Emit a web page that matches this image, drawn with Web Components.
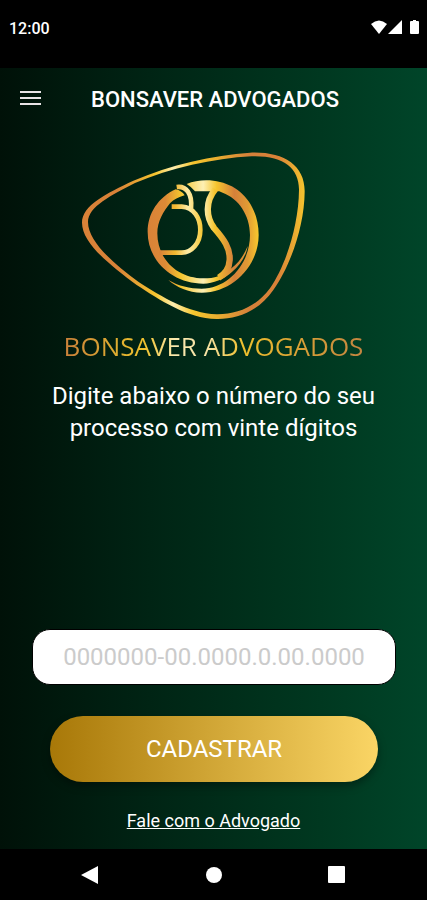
<!DOCTYPE html>
<html lang="pt-BR">
<head>
<meta charset="utf-8">
<meta name="viewport" content="width=device-width, initial-scale=1">
<title>Bonsaver Advogados</title>
<style>
    html, body {
        margin: 0;
        background-color: black;
        font-family: Roboto, "Liberation Sans", sans-serif;
        color: white;
    }
</style>
</head>
<body>
<bonsaver-app></bonsaver-app>

<script>
const makeTemplate = (html) => {
  const template = document.createElement("template");
  template.innerHTML = html;
  return template;
};

const statusTemplate = makeTemplate(`
    <style>
        :host {
            display: flex;
            align-items: center;
            justify-content: space-between;
            height: 56px;
            padding: 0 7px 12px 9px;
            background-color: black;
            font-size: 16px;
            font-weight: 500;
        }
        svg { display: block; }
    </style>
    <slot></slot>
    <svg width="50" height="16" viewBox="0 0 50 16" fill="white" aria-hidden="true">
        <path d="M1 4Q9 -3 17 4L9 14Z"/>
        <path d="M32 0V14H18Z"/>
        <path d="M41 1H43V0H46V1H48Q49 1 49 2V13Q49 14 48 14H41Q40 14 40 13V2Q40 1 41 1Z"/>
    </svg>
`);

const barTemplate = makeTemplate(`
    <style>
        :host {
            display: flex;
            align-items: center;
            gap: 50px;
            height: 62px;
            padding: 0 20px;
        }
        button {
            display: block;
            padding: 0;
            border: none;
            background: none;
        }
        svg { display: block; }
        h1 {
            margin: 2px 0 0;
            font-size: 22px;
            font-weight: 500;
            line-height: 28px;
        }
    </style>
    <button type="button" aria-label="Menu">
        <svg width="21" height="16" viewBox="0 0 21 16" fill="#e8e4e6">
            <path d="M0 0h21v2H0zM0 6h21v2H0zM0 12h21v2H0z"/>
        </svg>
    </button>
    <h1><slot></slot></h1>
`);

const logoTemplate = makeTemplate(`
    <style>
        :host {
            display: flex;
            flex-direction: column;
            align-items: center;
        }
        svg { display: block; }
        p {
            margin: 0;
            font-family: "Open Sans", "Noto Sans", sans-serif;
            font-size: 26px;
            line-height: 32px;
            color: transparent;
            background: linear-gradient(to right, #c9803a, #dfae30 18%, #f0c22e 27%, #fbeab0 37%, #f6e2a4 48%, #efc02d 60%, #dca635 75%, #c38540);
            background-clip: text;
            -webkit-background-clip: text;
        }
    </style>
    <svg width="287" height="190" viewBox="0 0 861 570" aria-hidden="true">
        <defs>
            <linearGradient id="loop" gradientUnits="userSpaceOnUse" x1="36" y1="0" x2="704" y2="0">
                <stop offset="0" stop-color="#d98238"/>
                <stop offset=".16" stop-color="#d98238"/>
                <stop offset=".33" stop-color="#f5c52e"/>
                <stop offset=".41" stop-color="#fdeeb0"/>
                <stop offset=".5" stop-color="#f5c52e"/>
                <stop offset=".6" stop-color="#eab030"/>
                <stop offset=".75" stop-color="#d5803a"/>
                <stop offset=".88" stop-color="#d98238"/>
                <stop offset="1" stop-color="#f5c52e"/>
            </linearGradient>
            <linearGradient id="ring" gradientUnits="userSpaceOnUse" x1="233" y1="0" x2="566" y2="0">
                <stop offset="0" stop-color="#d98238"/>
                <stop offset=".16" stop-color="#dd8a36"/>
                <stop offset=".3" stop-color="#f5c52e"/>
                <stop offset=".5" stop-color="#fdf0b4"/>
                <stop offset=".62" stop-color="#f5c52e"/>
                <stop offset=".78" stop-color="#d5803a"/>
                <stop offset=".9" stop-color="#e09a34"/>
                <stop offset="1" stop-color="#f7c92e"/>
            </linearGradient>
            <linearGradient id="letter" gradientUnits="userSpaceOnUse" x1="270" y1="0" x2="400" y2="0">
                <stop offset="0" stop-color="#d98238"/>
                <stop offset=".35" stop-color="#f2b830"/>
                <stop offset=".65" stop-color="#fdeca8"/>
                <stop offset="1" stop-color="#f5c52e"/>
            </linearGradient>
            <linearGradient id="curve" gradientUnits="userSpaceOnUse" x1="403" y1="0" x2="492" y2="0">
                <stop offset="0" stop-color="#fdeca8"/>
                <stop offset=".35" stop-color="#f5c52e"/>
                <stop offset="1" stop-color="#d5803a"/>
            </linearGradient>
        </defs>
        <path fill="url(#loop)" fill-rule="evenodd" d="M36 248C36 195 110 160 190 122C300 75 430 45 540 38C640 34 705 75 704 155C703 260 660 380 610 450C565 515 500 538 440 537C350 535 270 480 200 435C120 375 36 310 36 248Z
            M54 246C54 200 125 165 195 129C300 85 430 55 545 49C640 46 688 85 687 150C686 255 648 375 600 445C560 500 500 524 440 523C355 520 275 470 207 427C130 370 54 305 54 246Z"/>
        <path fill="url(#ring)" d="M317 148C265 172 233 220 233 276C233 365 310 431 400 431C430 431 462 418 485 397C510 375 528 350 533 318C522 345 508 366 486 383C455 408 435 415 400 415C325 415 262 360 262 280C262 245 280 215 300 190C312 178 325 172 344 166Q335 152 317 148Z"/>
        <path fill="url(#ring)" d="M350 132C380 119 420 118 450 126C520 142 566 205 566 285C566 375 490 458 395 458C355 458 320 442 295 420C325 438 360 446 395 446C475 446 540 370 540 285C540 225 505 175 458 158L448 154H375Q366 142 350 132Z"/>
        <path fill="none" stroke="url(#letter)" stroke-width="14" d="M320 141C348 137 368 160 363 207M305 200H335C372 202 391 235 391 270C391 310 365 338 335 338H268"/>
        <path fill="none" stroke="url(#curve)" stroke-width="19" d="M436 148C405 185 408 232 432 264C462 298 481 325 479 360Q477 396 446 413"/>
    </svg>
    <p><slot></slot></p>
`);

const formTemplate = makeTemplate(`
    <style>
        :host {
            display: flex;
            flex: 1;
            flex-direction: column;
        }
        form {
            display: flex;
            flex: 1;
            flex-direction: column;
        }
        label {
            margin: 18px 40px 0;
            font-size: 24px;
            line-height: 32px;
            text-align: center;
        }
        input {
            box-sizing: border-box;
            height: 56px;
            margin: auto 31px 0 32px;
            padding: 0 24px;
            border: 1px solid black;
            border-radius: 18px;
            background-color: white;
            color: #222;
            font: 24px Roboto, "Liberation Sans", sans-serif;
            text-align: center;
        }
        input::placeholder {
            color: #cbcbcb;
            opacity: 1;
        }
        button {
            height: 66px;
            margin: 31px 49px 0 50px;
            border: none;
            border-radius: 33px;
            background: linear-gradient(to right, #a87808, #fad565);
            box-shadow: 0 4px 8px rgba(0, 0, 0, .35);
            color: white;
            font: 24px Roboto, "Liberation Sans", sans-serif;
        }
        a {
            margin: 28px auto 17px;
            color: white;
            font-size: 18px;
            line-height: 22px;
        }
    </style>
    <form>
        <label for="processo"><slot></slot></label>
        <input id="processo" type="text" inputmode="numeric" placeholder="0000000-00.0000.0.00.0000">
        <button type="submit">CADASTRAR</button>
        <a href="#contato">Fale com o Advogado</a>
    </form>
`);

const navTemplate = makeTemplate(`
    <style>
        :host {
            display: flex;
            align-items: center;
            justify-content: space-between;
            height: 51px;
            padding: 0 81px;
            background-color: black;
        }
        button {
            padding: 0;
            border: none;
            background: none;
        }
        svg { display: block; }
    </style>
    <button type="button" aria-label="Voltar">
        <svg width="18" height="18" viewBox="0 0 18 18" fill="white"><path d="M0 9L17 0V18Z"/></svg>
    </button>
    <button type="button" aria-label="Início">
        <svg width="18" height="18" viewBox="0 0 18 18" fill="white"><circle cx="9" cy="9" r="8"/></svg>
    </button>
    <button type="button" aria-label="Recentes">
        <svg width="18" height="18" viewBox="0 0 18 18" fill="white"><rect width="17" height="17" rx="1"/></svg>
    </button>
`);

const appTemplate = makeTemplate(`
    <style>
        :host {
            display: flex;
            flex-direction: column;
            min-height: 100vh;
        }
        main {
            display: flex;
            flex: 1;
            flex-direction: column;
            background: linear-gradient(to right, #001108, #002414 35%, #003820 75%, #004529);
        }
        brand-logo { margin-top: 10px; }
    </style>
    <status-bar>12:00</status-bar>
    <main>
        <app-bar>BONSAVER ADVOGADOS</app-bar>
        <brand-logo>BONSAVER ADVOGADOS</brand-logo>
        <process-form>Digite abaixo o número do seu processo com vinte dígitos</process-form>
    </main>
    <nav-bar></nav-bar>
`);

class TemplateElement extends HTMLElement {
  constructor() {
    super();
    this.attachShadow({ mode: "open" });
    this.shadowRoot.appendChild(this.constructor.template.content.cloneNode(true));
  }
}

class StatusBar extends TemplateElement {
  static template = statusTemplate;
}

class AppBar extends TemplateElement {
  static template = barTemplate;
}

class BrandLogo extends TemplateElement {
  static template = logoTemplate;
}

class ProcessForm extends TemplateElement {
  static template = formTemplate;
  connectedCallback() {
    this.shadowRoot.querySelector("form").addEventListener("submit", (e) => {
      e.preventDefault();
    });
  }
}

class NavBar extends TemplateElement {
  static template = navTemplate;
}

class BonsaverApp extends TemplateElement {
  static template = appTemplate;
}

customElements.define("status-bar", StatusBar);
customElements.define("app-bar", AppBar);
customElements.define("brand-logo", BrandLogo);
customElements.define("process-form", ProcessForm);
customElements.define("nav-bar", NavBar);
customElements.define("bonsaver-app", BonsaverApp);
</script>
</body>
</html>
